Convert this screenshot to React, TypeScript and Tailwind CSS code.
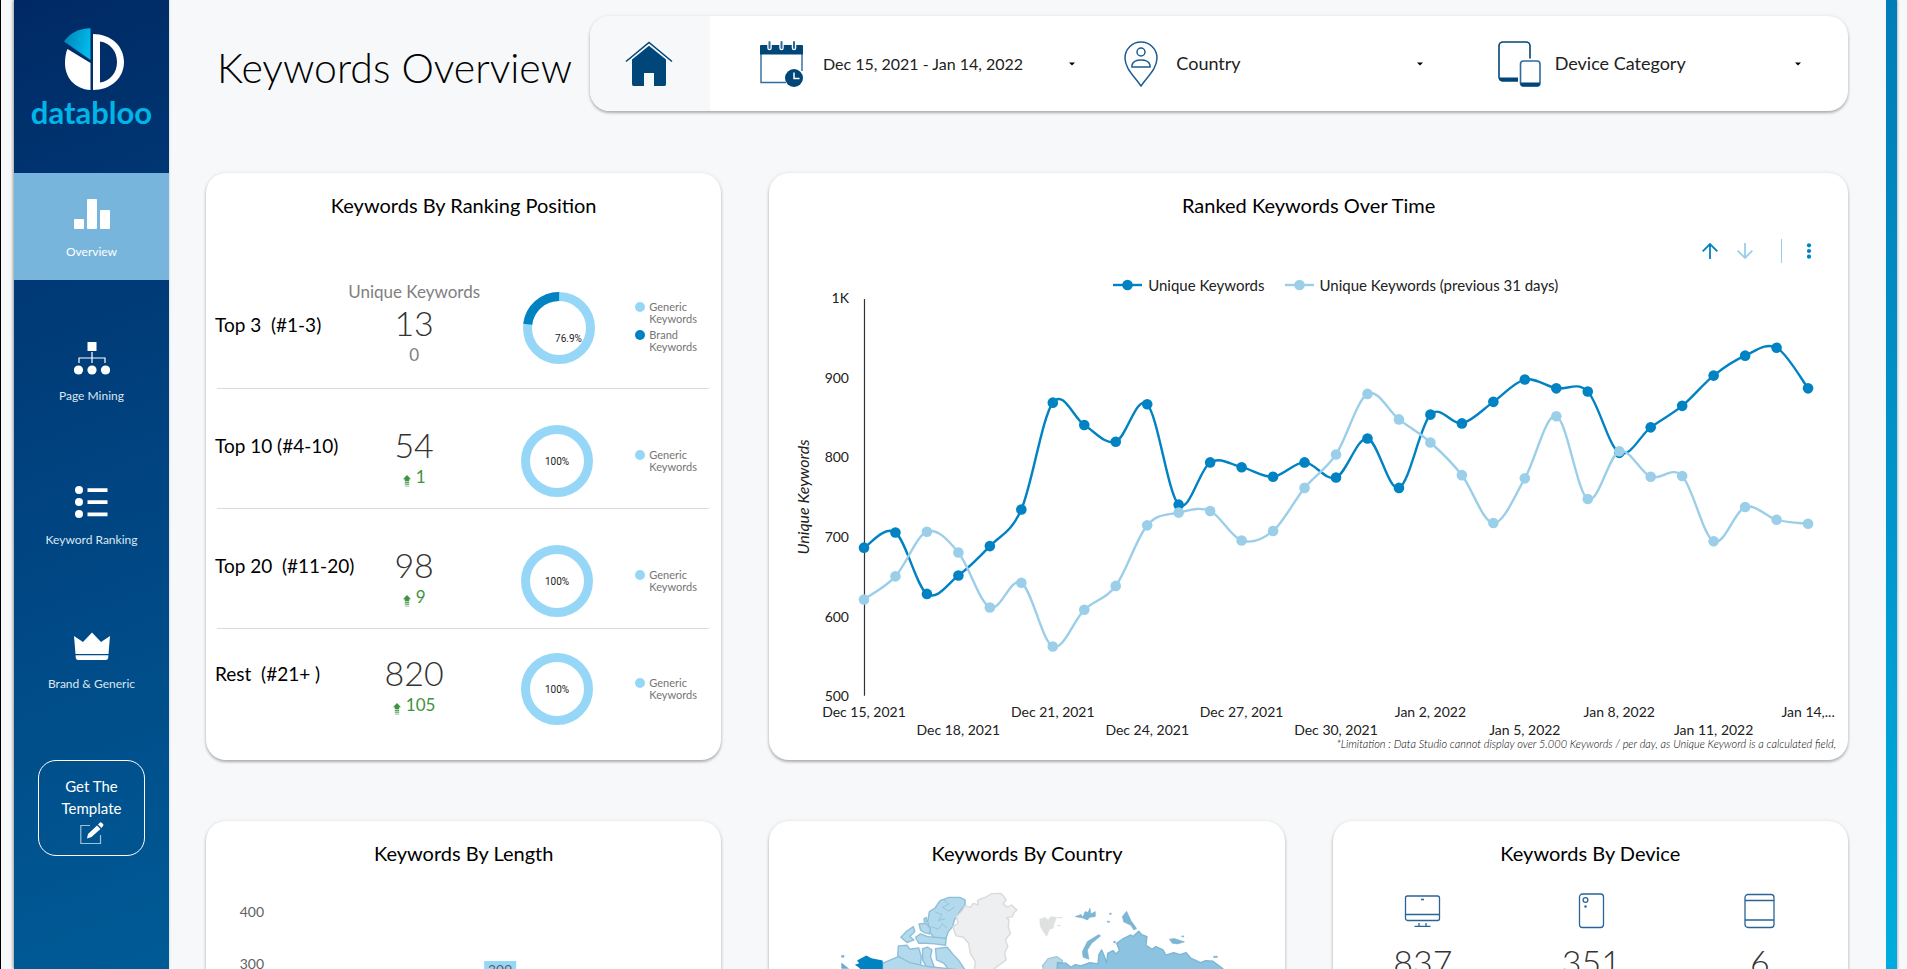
import React from "react";

const current = [
  686, 705, 628, 651, 688, 734, 868, 840, 819, 866, 740, 793, 787, 775, 793, 774, 823, 761, 853, 842, 869, 897, 886,
  882, 805, 837, 864, 902, 927, 937, 886,
];
const previous = [
  621, 650, 706, 680, 611, 642, 562, 608, 638, 714, 730, 732, 695, 707, 761, 803, 879, 847, 818, 777, 717, 773, 851,
  747, 807, 775, 776, 694, 737, 721, 716,
];
const dates = [
  "Dec 15, 2021", "Dec 18, 2021", "Dec 21, 2021", "Dec 24, 2021", "Dec 27, 2021", "Dec 30, 2021", "Jan 2, 2022",
  "Jan 5, 2022", "Jan 8, 2022", "Jan 11, 2022", "Jan 14,...",
];

const px = (i: number) => 95 + i * 31.48;
const py = (v: number) => 397 - (v - 500) * 0.797;

function smooth(values: number[]) {
  const p = values.map((v, i) => [px(i), py(v)]);
  let d = `M${p[0][0]} ${p[0][1]}`;
  for (let i = 0; i < p.length - 1; i++) {
    const a = p[Math.max(i - 1, 0)];
    const b = p[i];
    const c = p[i + 1];
    const e = p[Math.min(i + 2, p.length - 1)];
    const k = 6;
    d += `C${b[0] + (c[0] - a[0]) / k} ${b[1] + (c[1] - a[1]) / k} ${c[0] - (e[0] - b[0]) / k} ${c[1] - (e[1] - b[1]) / k} ${c[0]} ${c[1]}`;
  }
  return d;
}

function Series({ values, color }: { values: number[]; color: string }) {
  return (
    <g>
      <path d={smooth(values)} fill="none" stroke={color} strokeWidth="2.4" />
      {values.map((v, i) => (
        <circle key={i} cx={px(i)} cy={py(v)} r="5.3" fill={color} />
      ))}
    </g>
  );
}

function TimeChart() {
  return (
    <svg
      viewBox="0 0 1079 450"
      className="block h-auto w-full overflow-visible"
      role="img"
      aria-label="Ranked keywords over time"
    >
      <g fontSize="14" fill="#212121">
        {["1K", "900", "800", "700", "600", "500"].map((t, i) => (
          <text key={t} x="80" y={4 + i * 79.7} textAnchor="end">
            {t}
          </text>
        ))}
        {dates.map((t, i) => (
          <text key={t} x={px(i * 3)} y={i % 2 ? 436 : 418} textAnchor="middle">
            {t}
          </text>
        ))}
        <text
          x="0"
          y="0"
          transform="translate(40 198) rotate(-90)"
          textAnchor="middle"
          fontStyle="italic"
          fontSize="16"
        >
          Unique Keywords
        </text>
      </g>
      <path d="M95.500 0V397" stroke="#333" strokeWidth="1.2" />
      <Series values={current} color="#0082c3" />
      <Series values={previous} color="#9bcfe9" />
    </svg>
  );
}

function Card({ title, className = "", children }: { title: string; className?: string; children: React.ReactNode }) {
  return (
    <section
      className={`flex flex-col rounded-[20px] bg-white pt-[18px] shadow-[0_2px_3px_rgba(0,0,0,0.28),0_0_4px_rgba(0,0,0,0.08)] ${className}`}
    >
      <h2 className="mb-[2px] text-center text-[20px] leading-7 text-black">{title}</h2>
      {children}
    </section>
  );
}

function Donut({ generic, shift }: { generic: number; shift: string }) {
  const c = 2 * Math.PI * 31.5;
  return (
    <svg width="72" height="72" viewBox="0 0 72 72" className={`justify-self-center ${shift}`}>
      <circle cx="36" cy="36" r="31.5" fill="none" stroke="#96d7f8" strokeWidth="9" />
      {generic < 100 && (
        <circle
          cx="36"
          cy="36"
          r="31.5"
          fill="none"
          stroke="#0082c3"
          strokeWidth="9"
          strokeDasharray={`${c * (1 - generic / 100)} ${c}`}
          transform={`rotate(${-90 + generic * 3.6} 36 36)`}
        />
      )}
      <text
        x={generic < 100 ? 45.5 : 36}
        y={generic < 100 ? 50 : 39.5}
        fontSize="10"
        fontFamily="Roboto, sans-serif"
        textAnchor="middle"
        fill="#222"
      >
        {generic}%
      </text>
    </svg>
  );
}

function LegendKey({ color, name }: { color: string; name: string }) {
  return (
    <li className="flex gap-1">
      <span className={`mt-px size-[10px] shrink-0 rounded-full ${color}`} />
      <span>
        {name}
        <br />
        Keywords
      </span>
    </li>
  );
}

type Rank = { label: string; value: string; delta: string; generic: number; first?: boolean; pad: string; height: string };
const ranks: Rank[] = [
  { label: "Top 3  (#1-3)", value: "13", delta: "0", generic: 76.9, first: true, pad: "pt-3", height: "h-[120px]" },
  { label: "Top 10 (#4-10)", value: "54", delta: "1", generic: 100, pad: "pt-9", height: "h-[120px]" },
  { label: "Top 20  (#11-20)", value: "98", delta: "9", generic: 100, pad: "pt-9", height: "h-[120px]" },
  { label: "Rest  (#21+ )", value: "820", delta: "105", generic: 100, pad: "pt-6", height: "h-[131px]" },
];

function GrowthArrow() {
  return (
    <svg width="8" height="12" viewBox="0 0 8 12" className="mt-[10px]" fill="#3c9440">
      <path d="M4 0L8 4.200H6.200V6.200H1.800V4.200H0Z" />
      <path d="M1.800 6.800h4.400v1.600h-4.400z" opacity=".85" />
      <path d="M1.800 8.800h4.400v1.300h-4.400z" opacity=".65" />
      <path d="M1.800 10.500h4.400v1.300h-4.400z" opacity=".4" />
    </svg>
  );
}

function RankRow({ r }: { r: Rank }) {
  return (
    <li
      className={`grid grid-cols-[minmax(0,126fr)_minmax(0,142fr)_minmax(0,144fr)_minmax(0,80fr)] items-start border-b border-[#dcdcdc] last:border-0 ${r.pad} ${r.height}`}
    >
      <span className={`-ml-[2px] text-[19px] leading-7 whitespace-pre text-black ${r.first ? "mt-[30px]" : "mt-[7px]"}`}>
        {r.label}
      </span>
      <div className="flex flex-col items-center">
        {r.first && <span className="text-[17px] leading-[22px] whitespace-nowrap text-[#808080]">Unique Keywords</span>}
        <strong className="text-[34px] leading-10 font-light text-[#333]">{r.value}</strong>
        <span className={`flex gap-[5px] text-[17px] leading-6 ${r.first ? "text-[#808080]" : "text-[#3c9440]"}`}>
          {!r.first && <GrowthArrow />}
          {r.delta}
        </span>
      </div>
      <Donut generic={r.generic} shift={r.first ? "mt-[11px] ml-1" : ""} />
      <ul className={`flex flex-col gap-1 pl-[6px] text-[11px] leading-3 text-[#757575] ${r.first ? "mt-5" : "mt-6"}`}>
        <LegendKey color="bg-[#96d7f8]" name="Generic" />
        {r.first && <LegendKey color="bg-[#0082c3]" name="Brand" />}
      </ul>
    </li>
  );
}

function Logo() {
  return (
    <a href="#home" className="flex h-[173px] flex-col items-center pt-7">
      <svg width="60" height="63" viewBox="0 0 60 63" className="ml-1">
        <defs>
          <linearGradient id="wedge" x1="0" y1="0.3" x2="1" y2="0.6">
            <stop offset="0" stopColor="#0086b8" />
            <stop offset="1" stopColor="#00bdee" />
          </linearGradient>
        </defs>
        <path d="M0 13.500C6 5 15 .500 26.500 .300V32Z" fill="url(#wedge)" />
        <path d="M3.500 21L26.500 35V62C10 61 1 49 1 35C1 29 2 24 3.500 21Z" fill="#fff" />
        <path
          d="M29 6C47 6 60 18 60 34S47 62 29 62ZM36 13.500V54.500C46 53 53 45 53 34S46 15 36 13.500Z"
          fill="#fff"
          fillRule="evenodd"
        />
      </svg>
      <span className="mt-[3px] text-[31px] leading-9 font-bold text-[#00b5e8]">databloo</span>
    </a>
  );
}

const nav = [
  {
    name: "Overview",
    icon: (
      <>
        <rect x="0" y="22" width="10" height="10" rx="1" />
        <rect x="13" y="2" width="10" height="30" rx="1" />
        <rect x="26" y="13" width="10" height="19" rx="1" />
      </>
    ),
  },
  {
    name: "Page Mining",
    icon: (
      <>
        <rect x="13.500" y="1" width="9" height="9" />
        <path d="M18 11V22M5 22V17H31V22" fill="none" stroke="#fff" strokeWidth="1.200" />
        <circle cx="4.500" cy="29" r="4.600" />
        <circle cx="18" cy="29" r="4.600" />
        <circle cx="31.500" cy="29" r="4.600" />
      </>
    ),
  },
  {
    name: "Keyword Ranking",
    icon: (
      <>
        <circle cx="5" cy="5" r="4" />
        <circle cx="5" cy="17" r="4" />
        <circle cx="5" cy="29" r="4" />
        <path d="M13.500 3.300h20v3.700h-20zM13.500 15.300h20V19h-20zM13.500 27.500h20v3.700h-20z" />
      </>
    ),
  },
  {
    name: "Brand & Generic",
    icon: (
      <>
        <path d="M0 7L9 13L18 3.500L27 13L36 7L34.500 25H1.500Z" />
        <path d="M1.600 26.300H34.400L34.200 29Q33.800 31 32 31H4Q2.200 31 1.800 29Z" />
      </>
    ),
  },
];

function Sidebar() {
  return (
    <aside className="w-[155px] shrink-0 bg-[linear-gradient(160deg,#002964_0%,#003571_20%,#004683_55%,#005b96_100%)] shadow-[-1px_0_3px_rgba(0,0,0,0.4)]">
      <Logo />
      <nav className="flex flex-col gap-[37px]">
        {nav.map((n, i) => (
          <a
            key={n.name}
            href="#"
            className={`flex h-[107px] flex-col items-center pt-6 text-[12px] leading-4 ${i === 0 ? "bg-[#78b5dc] text-white" : "text-[#dbe7f2]"}`}
          >
            <svg width="36" height="34" viewBox="0 0 36 34" fill="#fff">
              {n.icon}
            </svg>
            <span className="mt-[13px]">{n.name}</span>
          </a>
        ))}
      </nav>
      <button className="mx-auto mt-12 flex h-24 w-[107px] flex-col items-center rounded-[18px] border border-white pt-[14px] text-[15px] leading-[22px] text-white">
        Get The
        <br />
        Template
        <svg width="24" height="24" viewBox="0 0 24 24" className="mt-[2px]">
          <path d="M10 4.500H.800V22.500H20.500V14" fill="none" stroke="#9fc1da" strokeWidth="1.200" />
          <path
            d="M7 17.500L8 13L17 4.500L20.500 8L11.500 16Z M18 3.500L20 1.500Q21 1 22 2L23 3Q24 4 23 5L21.500 7Z"
            fill="#fff"
          />
        </svg>
      </button>
    </aside>
  );
}

const Caret = () => (
  <svg width="6" height="4" viewBox="0 0 6 4" className="shrink-0">
    <path d="M0 .500H6L3 3.500Z" fill="#000" />
  </svg>
);

function Filters() {
  return (
    <div className="grid h-[95px] w-[1258px] shrink grid-cols-[120px_1fr_1fr_1fr] rounded-[20px] bg-white shadow-[0_2px_3px_rgba(0,0,0,0.28),0_0_4px_rgba(0,0,0,0.08)]">
      <a href="#home" aria-label="Home" className="flex items-center justify-center rounded-l-[20px] bg-[#f7f8fa] pr-[2px]">
        <svg width="48" height="46" viewBox="0 0 48 46">
          <path d="M1 20.500L24 1.500L47 20.500" fill="none" stroke="#004679" strokeWidth="1.600" />
          <path
            d="M7 18.500L24 4.800L41 18.500V43Q41 45 39.500 45H29V32H19V45H8.500Q7 45 7 43Z"
            fill="#004679"
          />
        </svg>
      </a>
      <button className="flex min-w-0 items-center pr-[14px] pl-[50px] text-[16px] text-[#212121]">
        <svg width="43" height="48" viewBox="0 0 43 48" className="shrink-0">
          <path d="M1 10V42.500H26M42 10V31" fill="none" stroke="#2f6b9b" strokeWidth="1.400" />
          <path d="M0 6Q0 5 1 5H42Q43 5 43 6V14.500H0Z" fill="#004679" />
          <g stroke="#fff" strokeWidth="4.500" strokeLinecap="round">
            <path d="M9.500 1.500V8M21.500 1.500V8M34 1.500V8" />
          </g>
          <g stroke="#2f6b9b" strokeWidth="2" strokeLinecap="round">
            <path d="M9.500 2V8M21.500 2V8M34 2V8" />
          </g>
          <circle cx="34" cy="38" r="9" fill="#004679" />
          <path d="M34 32.500V38.500H39.500" fill="none" stroke="#fff" strokeWidth="1.500" />
        </svg>
        <span className="ml-5 w-[203px] overflow-hidden text-left whitespace-nowrap">Dec 15, 2021 - Jan 14, 2022</span>
        <span className="ml-auto">
          <Caret />
        </span>
      </button>
      <label className="flex min-w-0 items-center pr-[46px] pl-[35px]">
        <svg
          width="34"
          height="46"
          viewBox="0 0 34 46"
          className="shrink-0"
          fill="none"
          stroke="#1d5c93"
          strokeWidth="1.500"
        >
          <path d="M17 45C9 34 1 27 1 17A16 16 0 0 1 33 17C33 27 25 34 17 45Z" />
          <circle cx="17" cy="11" r="4" />
          <path d="M8 26V24C9 20.500 13 19 17 19S25 20.500 26 24V26Z" />
        </svg>
        <select
          aria-label="Country"
          className="ml-[18px] min-w-0 flex-1 appearance-none bg-transparent text-[18px] text-[#212121]"
        >
          <option>Country</option>
        </select>
        <Caret />
      </label>
      <label className="flex min-w-0 items-center pr-[47px] pl-[29px]">
        <svg width="43" height="46" viewBox="0 0 43 46" className="shrink-0">
          <rect x="1" y="1" width="31" height="39" rx="4" fill="#fff" stroke="#004679" strokeWidth="1.600" />
          <path d="M1 36.500H32V37Q32 40 29 40H4Q1 40 1 37Z" fill="#004679" />
          <rect x="20" y="17.500" width="24" height="30" fill="#fff" />
          <rect x="22.500" y="20" width="19.500" height="25" rx="3" fill="#fff" stroke="#2f6b9b" strokeWidth="1.600" />
          <path d="M22.500 41.500H42V42Q42 45.500 39.500 45.500H25Q22.500 45.500 22.500 42Z" fill="#004679" />
        </svg>
        <select
          aria-label="Device Category"
          className="ml-[14px] min-w-0 flex-1 appearance-none bg-transparent text-[18px] text-[#212121]"
        >
          <option>Device Category</option>
        </select>
        <Caret />
      </label>
    </div>
  );
}

function SeriesKey({ color, name }: { color: string; name: string }) {
  return (
    <span className="flex items-center gap-1.5">
      <svg width="29" height="12" viewBox="0 0 29 12">
        <path d="M0 6H29" stroke={color} strokeWidth="2.400" />
        <circle cx="14.500" cy="6" r="5.300" fill={color} />
      </svg>
      {name}
    </span>
  );
}

function ChartTools() {
  return (
    <div className="mt-[18px] mr-[31px] flex h-6 items-center justify-end">
      <button aria-label="Drill up" className="mr-[19px]">
        <svg width="16" height="16" viewBox="0 0 16 16" fill="none" stroke="#0082c3" strokeWidth="1.800">
          <path d="M8 16V1M.700 8.300L8 1L15.300 8.300" />
        </svg>
      </button>
      <button aria-label="Drill down" className="mr-7">
        <svg width="16" height="16" viewBox="0 0 16 16" fill="none" stroke="#9bcfe9" strokeWidth="1.800">
          <path d="M8 0V15M.700 7.700L8 15L15.300 7.700" />
        </svg>
      </button>
      <span className="h-6 w-px bg-[#9bcfe9]" />
      <button aria-label="More options" className="ml-[19px] w-4">
        <svg width="6" height="16" viewBox="0 0 6 16" fill="#0082c3" className="mx-auto">
          <circle cx="3" cy="2.300" r="2.100" />
          <circle cx="3" cy="8" r="2.100" />
          <circle cx="3" cy="13.700" r="2.100" />
        </svg>
      </button>
    </div>
  );
}

function LengthChart() {
  return (
    <svg
      viewBox="0 0 515 300"
      className="mt-2 block h-auto w-full"
      role="img"
      aria-label="Keywords by length"
    >
      <g fontSize="14" fill="#616161">
        <text x="58" y="40" textAnchor="end">400</text>
        <text x="58" y="92" textAnchor="end">300</text>
        <rect x="278" y="84" width="32" height="200" fill="#96d7f8" />
        <text x="294" y="98" textAnchor="middle">309</text>
      </g>
    </svg>
  );
}

function WorldMap() {
  return (
    <svg viewBox="0 0 516 240" className="mt-2 block h-auto w-full" role="img" aria-label="Keywords by country">
      <g transform="translate(-9 -77) scale(.3571 .3333)" strokeWidth="4" strokeLinejoin="round">
        <g fill="#b3d9ed" stroke="#8fbfd8">
          <path d="M575 300L560 292L530 292L505 302L490 325L475 335L470 365L478 400L490 415L520 420L528 395L540 380L545 360L560 335L575 315Z" />
          <path d="M515 300L530 312L512 322L528 334L545 322M490 335L510 345L500 362L520 356M480 380L500 388L512 372L524 384" fill="none" strokeWidth="2.500" />
          <path d="M395 412L410 395L430 380L434 395L420 410L432 420L412 428Z" />
          <path d="M446 372L465 370L478 385L475 402L460 398L450 390Z" />
          <path d="M460 356L466 353L468 366L461 366Z" />
          <path d="M436 412L450 402L470 410L522 415L520 436L490 432L465 430L445 430Z" />
          <path d="M388 438L412 436L420 448L445 444L452 470L450 500L415 490L386 468Z" />
          <path d="M456 446L470 442L482 450L478 470L488 500L470 508L456 480Z" />
          <path d="M492 446L525 442L540 462L556 480L575 510L530 510L515 490L495 480Z" />
          <path d="M344 490L388 470L420 488L470 500L560 510L560 720L344 720Z" />
        </g>
        <path d="M228 488L250 507H228Z M228 466h8v7h-8z" fill="#66add3" />
        <path d="M266 495L278 490L272 482L298 467L312 475L344 482V540H266L280 505Z" fill="#0082c3" />
        <path
          d="M541 380L556 370L550 350L565 335L575 318L590 322L598 310L612 315L610 304L615 298L632 292L650 281L675 280L684 290L690 300L682 312L694 322L705 315L720 330L712 338L708 350L692 354L698 360L696 380L702 400L688 420L695 440L686 458L690 480L665 500L640 520H600L604 485L590 462L585 430L570 412L550 408L545 395Z"
          fill="#eeeff0"
          stroke="#d8dadb"
        />
        <path
          d="M784 358L800 352L808 360L815 350L832 352L825 370L822 385L812 388L804 410L794 395L786 380Z M835 352h12v2h-12z M834 376h8v2h-8z"
          fill="#dfe0e0"
          stroke="#dadcdc"
          strokeWidth="1"
        />
        <g fill="#7db5d4" stroke="#7db5d4" strokeWidth="2">
          <path d="M884 350L900 344L905 352L912 335L920 338L925 325L928 342L940 335V350L925 352L918 360L905 354Z" />
          <path d="M950 404L955 408L930 430L918 450L922 478L906 472L904 455L918 425Z" />
          <path d="M1016 350L1028 334L1040 362L1056 386L1048 390L1040 376L1020 366Z" />
          <path d="M1148 418L1162 416L1190 426L1170 432L1156 430Z" />
          <path d="M1272 469h10v4h-10z M980 340h5v3h-5z M974 364h6v3h-6z M992 424h4v5h-4z M1183 408h5v3h-5z" />
        </g>
        <path d="M792 498L808 476L832 470L848 482L838 520L800 530Z" fill="#b9d8e8" stroke="#a3c8dc" />
        <path
          d="M834 488L858 490L872 502L884 494L900 498L925 488L948 492L950 465L958 450L964 465L972 490L975 460L990 452L998 462L1008 452L1000 430L1020 415L1040 405L1046 410L1062 394L1070 404L1085 410L1082 436L1100 448L1110 440L1130 450L1138 466L1160 458L1178 464L1195 458L1208 475L1235 488L1250 482L1270 484L1298 507V720H830Z"
          fill="#8bc3e1"
          stroke="#7db5d4"
        />
      </g>
    </svg>
  );
}

const devices = [
  {
    name: "Desktop",
    count: "837",
    icon: (
      <>
        <rect x="1.500" y="3" width="34" height="24.500" rx="2" />
        <path d="M1.500 21.500H35.500M17 6.500H20M15 30V33M22 30V33M10.500 33.300H26.500" />
      </>
    ),
  },
  {
    name: "Mobile",
    count: "351",
    icon: (
      <>
        <rect x="6.500" y="1" width="24" height="33.500" rx="3" />
        <circle cx="12.500" cy="7" r="2.400" />
        <circle cx="12.500" cy="13.500" r=".600" />
      </>
    ),
  },
  {
    name: "Tablet",
    count: "6",
    icon: (
      <>
        <rect x="4" y="1.500" width="29" height="33" rx="3" />
        <path d="M4 7.500H33M4 27H33" />
      </>
    ),
  },
];

export default function App() {
  return (
    <div className="flex h-screen overflow-hidden border-l border-black bg-[#f7f8fa] pl-[13px] font-['Lato','Open_Sans',sans-serif] font-normal">
      <Sidebar />
      <main className="flex min-w-0 flex-1 flex-col pt-4 pr-[38px] pl-[37px]">
        <header className="mb-[62px] flex items-center justify-between">
          <h1 className="pt-2 pl-[11px] text-[41px] leading-[50px] font-light whitespace-nowrap text-black">
            Keywords Overview
          </h1>
          <Filters />
        </header>
        <div className="grid shrink-0 grid-cols-3 gap-x-12 gap-y-[61px]">
          <Card title="Keywords By Ranking Position" className="min-h-[587px]">
            <ul className="mt-12 mr-3 ml-[11px]">
              {ranks.map((r) => (
                <RankRow key={r.value} r={r} />
              ))}
            </ul>
          </Card>
          <Card title="Ranked Keywords Over Time" className="col-span-2">
            <ChartTools />
            <div className="mt-[10px] mb-[2px] flex justify-center gap-5 pl-[54px] text-[15px] leading-6 text-[#212121]">
              <SeriesKey color="#0082c3" name="Unique Keywords" />
              <SeriesKey color="#9bcfe9" name="Unique Keywords (previous 31 days)" />
            </div>
            <TimeChart />
            <p className="mr-3 -mt-[11px] text-right text-[11px] leading-3 font-light text-black italic">
              *Limitation : Data Studio cannot display over 5.000 Keywords / per day, as Unique Keyword is a calculated field,
            </p>
          </Card>
          <Card title="Keywords By Length">
            <LengthChart />
          </Card>
          <Card title="Keywords By Country">
            <WorldMap />
          </Card>
          <Card title="Keywords By Device">
            <div className="mt-6 grid grid-cols-3 pr-1 pl-[6px]">
              {devices.map((d) => (
                <div key={d.name} className="flex flex-col items-center">
                  <svg
                    width="37"
                    height="36"
                    viewBox="0 0 37 36"
                    fill="none"
                    stroke="#2a6496"
                    strokeWidth="1.300"
                    role="img"
                    aria-label={d.name}
                  >
                    {d.icon}
                  </svg>
                  <span className="mt-[13px] text-[34px] leading-10 font-light text-[#333]">{d.count}</span>
                </div>
              ))}
            </div>
          </Card>
        </div>
      </main>
      <div className="w-[11px] shrink-0 bg-linear-to-b from-[#007db8] to-[#00acdf] shadow-[1px_0_2px_rgba(0,0,0,0.25)]" />
      <div className="w-[10px] shrink-0" />
    </div>
  );
}
